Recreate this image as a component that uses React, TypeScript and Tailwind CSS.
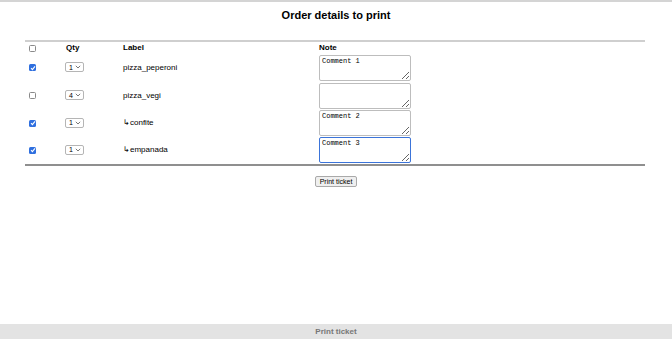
import React from 'react'

type Row = {
  checked: boolean
  qty: number
  label: string
  note: string
  focused?: boolean
}

const rows: Row[] = [
  { checked: true, qty: 1, label: 'pizza_peperoni', note: 'Comment 1' },
  { checked: false, qty: 4, label: 'pizza_vegi', note: '' },
  { checked: true, qty: 1, label: '↳confite', note: 'Comment 2' },
  { checked: true, qty: 1, label: '↳empanada', note: 'Comment 3', focused: true },
]

const Check = ({ checked }: { checked: boolean }) =>
  checked ? (
    <span className="inline-flex w-[7px] h-[7px] rounded-[1.5px] bg-[#2f6fdf] items-center justify-center">
      <svg width="6" height="6" viewBox="0 0 6 6">
        <path d="M1 3.2 L2.4 4.6 L5 1.4" stroke="white" strokeWidth="1.1" fill="none" />
      </svg>
    </span>
  ) : (
    <span className="inline-block w-[7px] h-[7px] rounded-[1.5px] border border-[#8a8a8a] bg-white" />
  )

const QtySelect = ({ value }: { value: number }) => (
  <span className="inline-flex items-center gap-[2px] h-[10px] pl-[3px] pr-[2px] border border-[#b5b5b5] rounded-[2px] bg-white text-[7px] leading-none text-black">
    {value}
    <svg width="6" height="4" viewBox="0 0 6 4">
      <path d="M0.8 0.8 L3 3 L5.2 0.8" stroke="#555" strokeWidth="0.8" fill="none" />
    </svg>
  </span>
)

export default function App() {
  return (
    <div
      className="w-[672px] h-[339px] bg-white border-t-2 border-[#d4d4d4] flex flex-col text-black"
      style={{ fontFamily: '"Liberation Sans", Arial, sans-serif' }}
    >
      <h1 className="text-center font-bold text-[11px] leading-none mt-[8px]">
        Order details to print
      </h1>

      <table className="w-[620px] ml-[25px] mt-[19px] border-collapse border-t-2 border-b-2 border-t-[#cfcfcf] border-b-[#8f8f8f] text-[8px]">
        <thead>
          <tr className="h-[12px]">
            <th className="w-[40px] pl-[4px] text-left align-middle">
              <span className="flex">
                <Check checked={false} />
              </span>
            </th>
            <th className="w-[58px] pl-[1px] text-left font-bold">Qty</th>
            <th className="w-[196px] text-left font-bold">Label</th>
            <th className="text-left font-bold">Note</th>
          </tr>
        </thead>
        <tbody>
          {rows.map((r, i) => (
            <tr key={i} className="h-[27.7px]">
              <td className="pl-[4px] align-middle">
                <span className="flex">
                  <Check checked={r.checked} />
                </span>
              </td>
              <td className="align-middle">
                <QtySelect value={r.qty} />
              </td>
              <td className="align-middle text-[8px]">{r.label}</td>
              <td className="align-middle">
                <textarea
                  defaultValue={r.note}
                  className={
                    'block w-[92px] h-[26px] px-[2px] py-[1px] text-[7px] leading-[8px] rounded-[2px] bg-white outline-none ' +
                    (r.focused ? 'border-[1.5px] border-[#3b74d9]' : 'border border-[#bdbdbd]')
                  }
                  style={{ fontFamily: '"Liberation Mono", "DejaVu Sans Mono", monospace' }}
                />
              </td>
            </tr>
          ))}
        </tbody>
      </table>

      <div className="flex justify-center mt-[10px]">
        <button className="h-[11px] px-[4px] text-[7px] leading-none border border-[#a9a9a9] rounded-[2px] bg-[#efefef] text-black">
          Print ticket
        </button>
      </div>

      <div className="mt-auto h-[15px] bg-[#e3e3e3] flex items-center justify-center text-[8px] font-bold text-[#777]">
        Print ticket
      </div>
    </div>
  )
}
